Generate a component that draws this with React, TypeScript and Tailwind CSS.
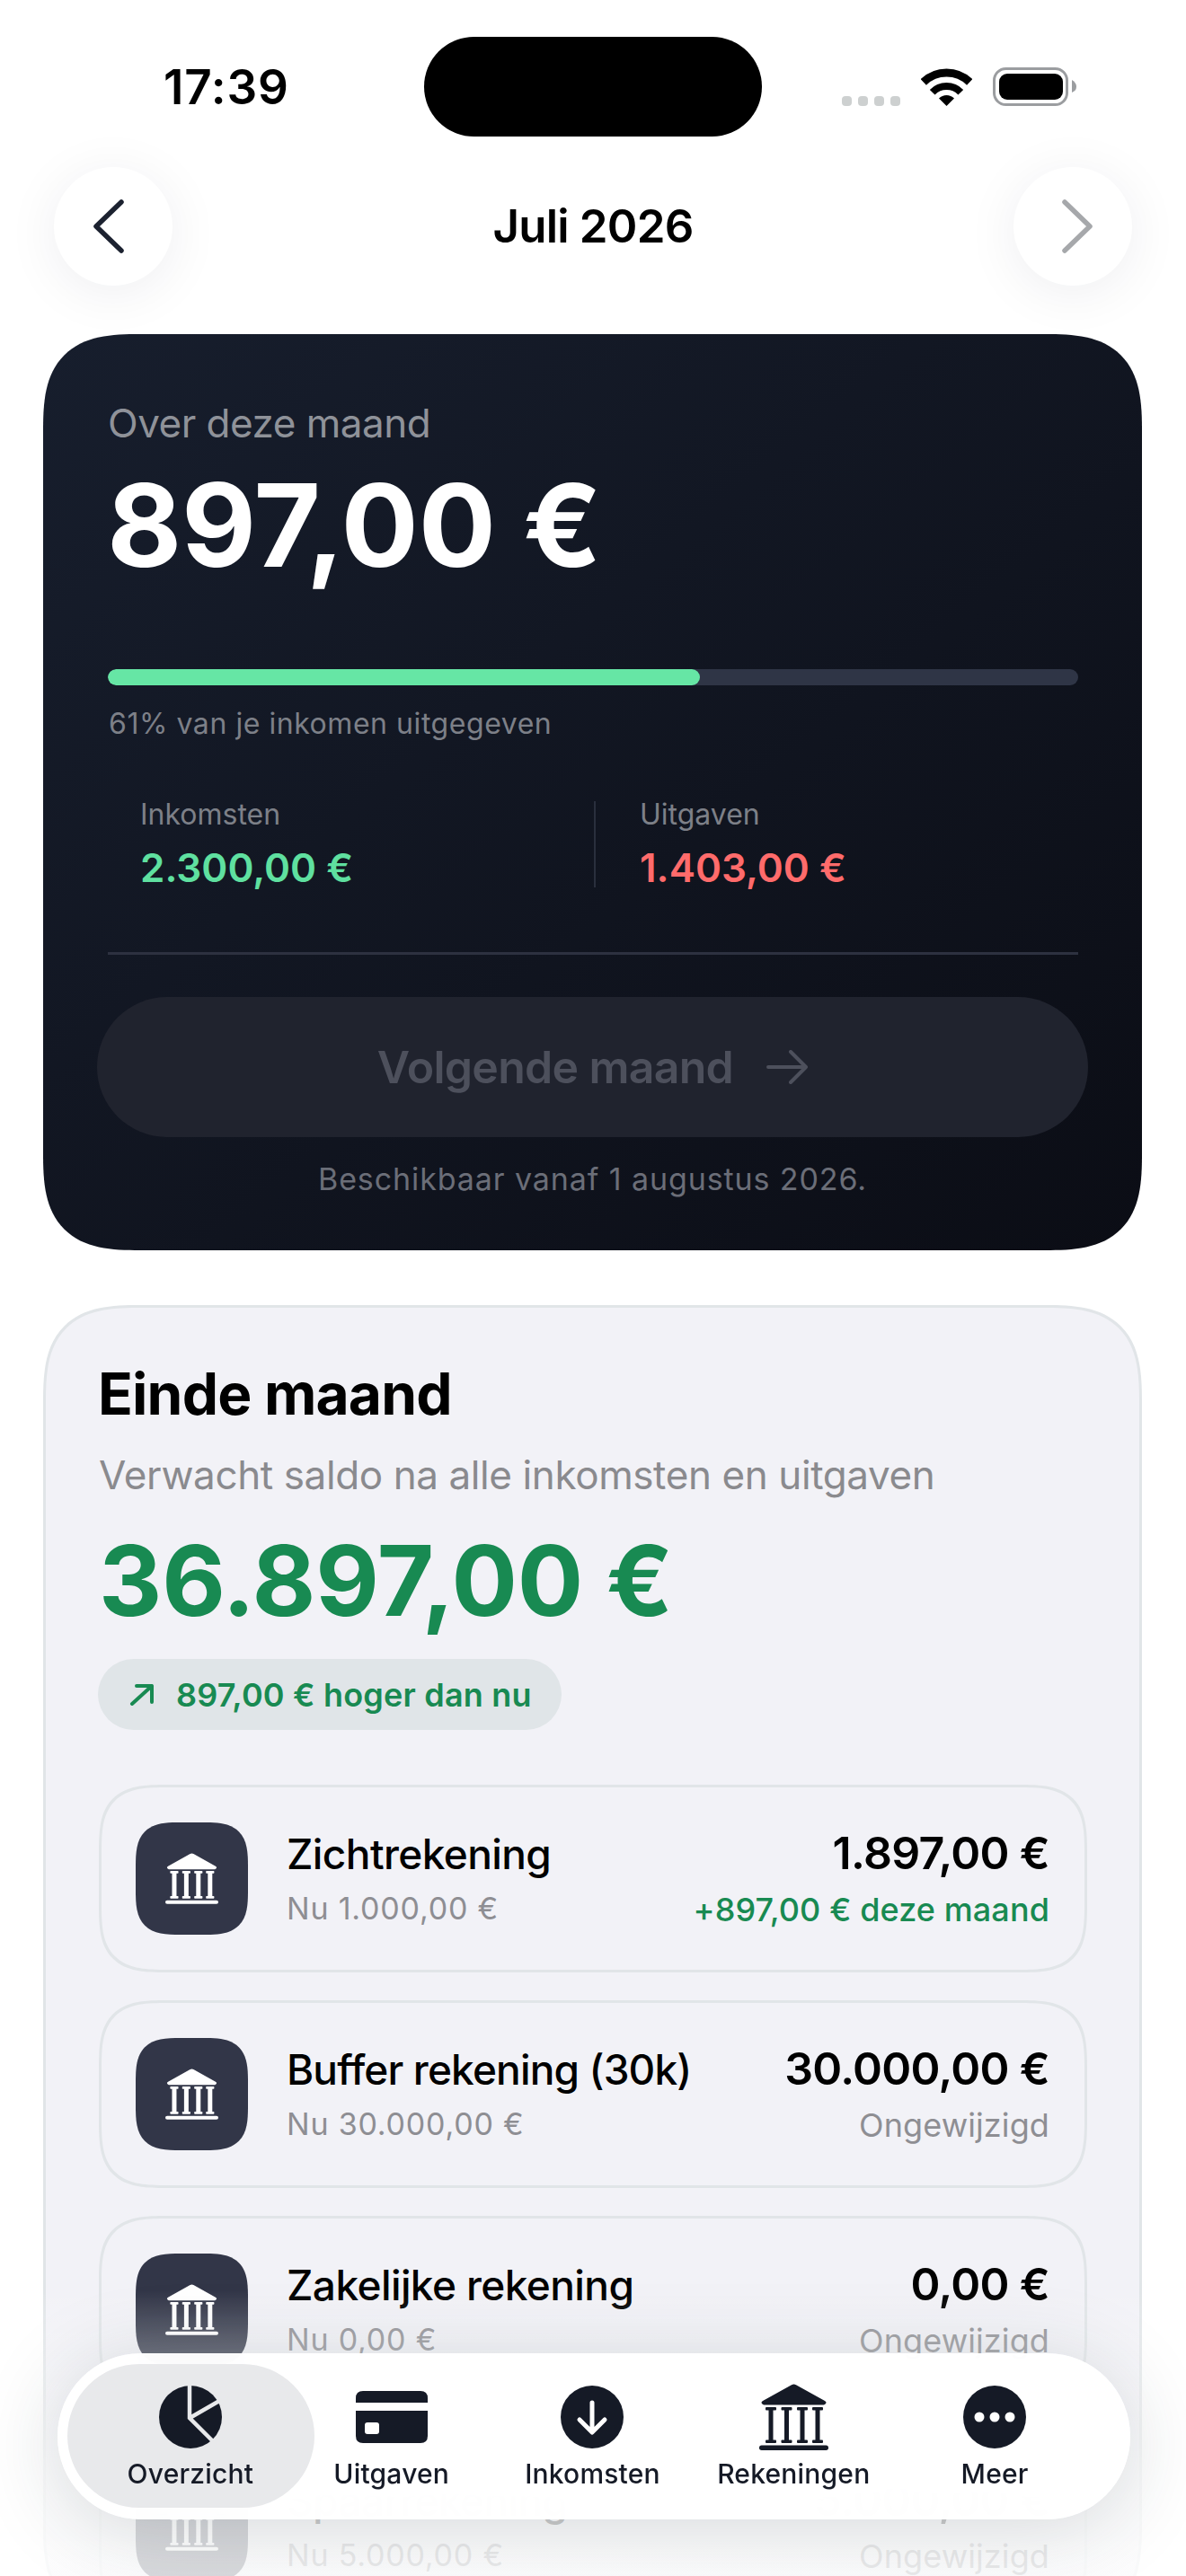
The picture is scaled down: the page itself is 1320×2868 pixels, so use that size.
import React from "react";

function Bank({ className, fill, col = 5 }: { className: string; fill: string; col?: number }) {
  const xs = [13, 30.5, 48, 65];
  return (
    <svg viewBox="0 0 77 74" className={className} fill={fill}>
      <path d="M36 1.2 Q38.5 -0.2 41 1.2 L73 19 Q76.5 21.5 72 23.5 H5 Q0.5 21.5 4 19 Z" />
      {xs.map((x) => (
        <g key={x}>
          <rect x={x - 6} y={26} width={12} height={3.5} rx={1} />
          <rect x={x - col / 2} y={28} width={col} height={36} />
          <rect x={x - 6} y={62.5} width={12} height={3.5} rx={1} />
        </g>
      ))}
      <rect x={0} y={68.5} width={77} height={5.5} rx={2.7} />
    </svg>
  );
}

function Wifi() {
  return (
    <svg viewBox="0 0 57 42" className="w-[57px] h-[42px]" fill="none" stroke="#000">
      <path d="M2.8 15.4 A37 37 0 0 1 54.2 15.4" strokeWidth={9} />
      <path d="M12.7 26.7 A22 22 0 0 1 44.3 26.7" strokeWidth={8} />
      <path d="M28.5 42 L20 33.5 A12 12 0 0 1 37 33.5 Z" fill="#000" stroke="none" />
    </svg>
  );
}

function Battery() {
  return (
    <svg viewBox="0 0 93 43" className="w-[93px] h-[43px]">
      <rect x={1.5} y={1.5} width={81} height={40} rx={13} fill="none" stroke="#9b9da0" strokeWidth={3} />
      <rect x={7} y={7} width={71} height={29} rx={9} fill="#000" />
      <path d="M88 14 Q93 17 93 21.5 Q93 26 88 28 Z" fill="#9b9da0" />
    </svg>
  );
}

function Chevron({ dir, color }: { dir: "l" | "r"; color: string }) {
  return (
    <svg viewBox="0 0 36 60" className="w-[36px] h-[60px]" fill="none" stroke={color} strokeWidth={5.5} strokeLinecap="round" strokeLinejoin="round">
      <path d={dir === "l" ? "M32 3 L4 30 L32 57" : "M4 3 L32 30 L4 57"} />
    </svg>
  );
}

function Pie() {
  return (
    <svg viewBox="0 0 70 70" className="w-[70px] h-[70px]" fill="#151a26">
      <circle cx={35} cy={35} r={35} />
      <path d="M34 -2 V36 L64 66 M36 35 L74 13" fill="none" stroke="#e8e9eb" strokeWidth={4.5} />
    </svg>
  );
}

function CardIcon() {
  return (
    <svg viewBox="0 0 80 58" className="w-[80px] h-[58px]">
      <path d="M0 13 V8 Q0 0 8 0 H72 Q80 0 80 8 V13 Z" fill="#151a26" />
      <path d="M0 22 H80 V50 Q80 58 72 58 H8 Q0 58 0 50 Z" fill="#151a26" />
      <rect x={10} y={35} width={16} height={13} rx={3} fill="#fff" />
    </svg>
  );
}

function DownIcon() {
  return (
    <svg viewBox="0 0 70 70" className="w-[70px] h-[70px]">
      <circle cx={35} cy={35} r={35} fill="#151a26" />
      <path d="M35 19 V51 M21 38 L35 52 L49 38" fill="none" stroke="#fff" strokeWidth={5} strokeLinecap="round" strokeLinejoin="round" />
    </svg>
  );
}

function MoreIcon() {
  return (
    <svg viewBox="0 0 70 70" className="w-[70px] h-[70px]">
      <circle cx={35} cy={35} r={35} fill="#151a26" />
      <circle cx={18} cy={35} r={5.5} fill="#fff" />
      <circle cx={35} cy={35} r={5.5} fill="#fff" />
      <circle cx={52} cy={35} r={5.5} fill="#fff" />
    </svg>
  );
}

const accounts = [
  { name: "Zichtrekening", now: "Nu 1.000,00 €", amount: "1.897,00 €", sub: "+897,00 € deze maand", up: true, nameCls: "tracking-[-0.6px]" },
  { name: "Buffer rekening (30k)", now: "Nu 30.000,00 €", amount: "30.000,00 €", sub: "Ongewijzigd", up: false, nameCls: "tracking-[-0.85px]" },
  { name: "Zakelijke rekening", now: "Nu 0,00 €", amount: "0,00 €", sub: "Ongewijzigd", up: false, nameCls: "tracking-[-0.6px]" },
  { name: "Spaarrekening", now: "Nu 5.000,00 €", amount: "5.000,00 €", sub: "Ongewijzigd", up: false, nameCls: "tracking-[-0.6px]" },
];

const tabs = [
  { label: "Overzicht", icon: <Pie /> },
  { label: "Uitgaven", icon: <CardIcon /> },
  { label: "Inkomsten", icon: <DownIcon /> },
  { label: "Rekeningen", icon: <Bank className="w-[77px] h-[74px]" fill="#151a26" /> },
  { label: "Meer", icon: <MoreIcon /> },
];

export default function App() {
  return (
    <div className="relative w-[1320px] h-[2868px] overflow-hidden bg-white [font-family:Inter,sans-serif]">
      {/* status bar */}
      <div className="flex pt-[41px] h-[152px]">
        <div className="w-[472px] pl-[182px] pt-[28px] text-[53px] leading-[56px] font-semibold tracking-[0.8px] text-black">17:39</div>
        <div className="w-[376px] h-[111px] rounded-full bg-black" />
        <div className="flex items-end gap-[23px] pl-[89px] pb-[34px]">
          <div className="flex gap-[7px]">
            {[0, 1, 2, 3].map((i) => (
              <div key={i} className="w-[11px] h-[11px] rounded-[4px] bg-[#cdd0d0]" />
            ))}
          </div>
          <div className="flex items-end gap-[23px]">
            <Wifi />
            <Battery />
          </div>
        </div>
      </div>

      {/* header */}
      <div className="flex items-center justify-between px-[60px] mt-[34px] h-[132px]">
        <div className="flex items-center justify-center w-[132px] h-[132px] rounded-full bg-white shadow-[0_8px_60px_rgba(20,30,50,0.07)] pr-[10px]">
          <Chevron dir="l" color="#1c2230" />
        </div>
        <div className="text-[51px] leading-[60px] font-semibold text-black tracking-[-0.8px]">Juli 2026</div>
        <div className="flex items-center justify-center w-[132px] h-[132px] rounded-full bg-white shadow-[0_8px_60px_rgba(20,30,50,0.07)] pl-[10px]">
          <Chevron dir="r" color="#a6a8ab" />
        </div>
      </div>

      {/* hero card */}
      <div className="ml-[48px] mt-[54px] w-[1223px] h-[1020px] rounded-[108px] [corner-shape:superellipse(1.5)] bg-linear-to-br from-[#171e2d] to-[#0b0d15] pt-[73px]">
        <div className="px-[72px]">
          <div className="text-[44px] leading-[52px] text-[#8f9299] tracking-[-0.5px]">Over deze maand</div>
          <div className="mt-[23px] -ml-[1px] text-[128px] leading-[130px] font-bold text-white tracking-[-0.2px]">897,00 €</div>
          <div className="mt-[95px] h-[18px] w-[1080px] rounded-full bg-[#2f3546] overflow-hidden">
            <div className="h-full rounded-full bg-[#66e6a5] w-[659px]" />
          </div>
          <div className="mt-[23px] pl-[1px] text-[32px] leading-[40px] text-[#7d8088] tracking-[0.55px]">61% van je inkomen uitgegeven</div>
          <div className="mt-[66px] h-[96px] flex w-[1080px]">
            <div className="w-[541px] pl-[36px]">
              <div className="text-[32px] leading-[30px] text-[#7d8088]">Inkomsten</div>
              <div className="mt-[19px] text-[44px] leading-[50px] font-semibold text-[#5fe0a0]">2.300,00 €</div>
            </div>
            <div className="flex-1 border-l-2 border-[#2a2f3d] pl-[49px]">
              <div className="text-[32px] leading-[30px] text-[#7d8088]">Uitgaven</div>
              <div className="mt-[19px] text-[44px] leading-[50px] font-semibold text-[#ff6b6b]">1.403,00 €</div>
            </div>
          </div>
          <div className="mt-[72px] h-[3px] w-[1080px] bg-[#2d3140]" />
        </div>
        <div className="ml-[60px] w-[1103px] mt-[47px] h-[156px] rounded-full bg-[#20232e] flex items-center justify-center gap-[37px]">
          <span className="text-[50px] leading-[60px] font-semibold tracking-[-0.7px] text-[#4d505c]">Volgende maand</span>
          <svg viewBox="0 0 46 38" className="w-[46px] h-[38px]" fill="none" stroke="#4d505c" strokeWidth={4} strokeLinecap="round" strokeLinejoin="round">
            <path d="M2 19 H44 M27 2 L44 19 L27 36" />
          </svg>
        </div>
        <div className="mt-[25px] text-center text-[34px] leading-[44px] text-[#6b6e78] tracking-[0.9px]">Beschikbaar vanaf 1 augustus 2026.</div>
      </div>

      {/* end of month card */}
      <div className="ml-[48px] mt-[61px] w-[1223px] rounded-[108px] [corner-shape:superellipse(1.5)] border-[3px] border-[#e1e5e8] bg-[#f2f2f7] pt-[60px] px-[59px]">
        <div className="-ml-[1px] text-[64px] leading-[72px] font-bold text-black tracking-[-0.8px]">Einde maand</div>
        <div className="mt-[27px] text-[44px] leading-[54px] text-[#8a8a8e] tracking-[-0.4px]">Verwacht saldo na alle inkomsten en uitgaven</div>
        <div className="mt-[30px] text-[109px] leading-[120px] font-bold text-[#188a52] tracking-[-0.2px]">36.897,00 €</div>
        <div className="mt-[28px] -ml-[1px] h-[79px] w-[516px] rounded-full bg-[#e0e5e8] flex items-center pl-[35px] gap-[24px]">
          <svg viewBox="0 0 28 24" className="w-[28px] h-[24px]" fill="none" stroke="#188a52" strokeWidth={4} strokeLinecap="round" strokeLinejoin="round">
            <path d="M3 22 L25 2 M8 2 H25 V20" />
          </svg>
          <span className="text-[36px] leading-[44px] font-semibold text-[#188a52] tracking-[0.2px]">897,00 € hoger dan nu</span>
        </div>
        <div className="mt-[61px] flex flex-col gap-[31px]">
          {accounts.map((a) => (
            <div key={a.name} className="h-[209px] w-[1100px] rounded-[76px] [corner-shape:superellipse(1.6)] border-[3px] border-[#e1e5e8] flex items-center pl-[38px] pr-[39px]">
              <div className="w-[125px] h-[125px] rounded-[50px] [corner-shape:superellipse(1.6)] bg-[#323648] flex items-center justify-center">
                <Bank className="w-[59px] h-[57px]" fill="#fff" col={6.5} />
              </div>
              <div className="ml-[43px] flex-1 flex flex-col gap-[11px]">
                <div className={"text-[46px] leading-[56px] font-medium text-black " + a.nameCls}>{a.name}</div>
                <div className="text-[34px] leading-[44px] text-[#8e8e93] tracking-[0.8px]">{a.now}</div>
              </div>
              <div className="flex flex-col items-end gap-[13px]">
                <div className="text-[50px] leading-[56px] font-semibold text-black tracking-[-0.7px]">{a.amount}</div>
                <div className={a.up ? "text-[36px] leading-[44px] font-medium text-[#188a52] tracking-[0.1px]" : "text-[36px] leading-[44px] text-[#8e8e93] tracking-[0.1px]"}>{a.sub}</div>
              </div>
            </div>
          ))}
        </div>
      </div>

      {/* bottom fade */}
      <div className="absolute inset-x-0 bottom-0 h-[318px] bg-linear-to-b from-[rgba(255,255,255,0)] via-[rgba(255,255,255,0.78)] via-60% to-[rgba(255,255,255,0.82)]" />

      {/* tab bar */}
      <div className="absolute left-[64px] top-[2620px] w-[1194px] h-[185px] rounded-full bg-white/95 backdrop-blur-xl shadow-[0_10px_90px_rgba(30,45,55,0.17)] pt-[34px] pl-[36px] pr-[39px]">
        <div className="absolute left-[11px] top-[12px] w-[275px] h-[160px] rounded-full bg-[#e8e9eb]" />
        <div className="relative grid grid-cols-5">
          {tabs.map((t) => (
            <div key={t.label} className="flex flex-col items-center">
              <div className="h-[74px] flex items-center justify-center">{t.icon}</div>
              <div className="mt-[8px] text-[30px] leading-[36px] font-medium text-[#151a26] tracking-[0.2px]">{t.label}</div>
            </div>
          ))}
        </div>
      </div>
    </div>
  );
}
